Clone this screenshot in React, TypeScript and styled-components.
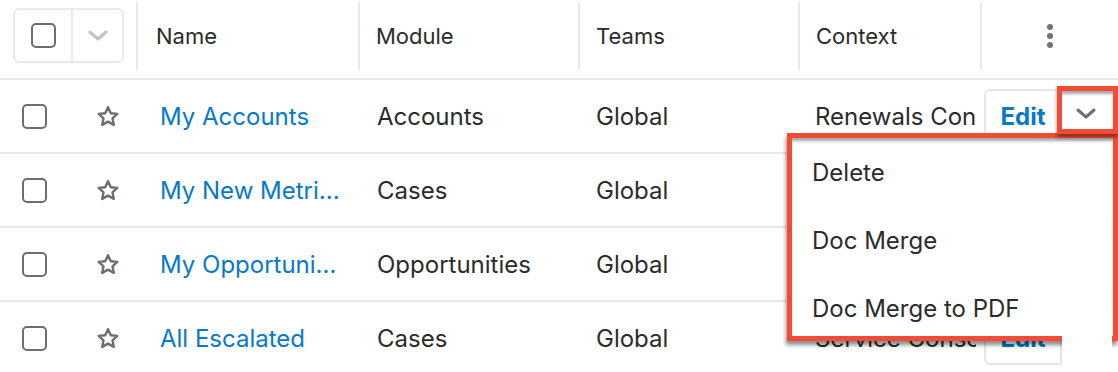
import React from "react";
import styled, { createGlobalStyle } from "styled-components";

const GlobalStyle = createGlobalStyle`
  html, body { margin: 0; padding: 0; background: #ffffff; }
  body {
    font-family: Inter, "Noto Sans", "Liberation Sans", sans-serif;
    color: #2b2b2b;
    -webkit-font-smoothing: antialiased;
  }
`;

const HEAD_COLS = "136px 222px 220px 220px 182px 138px";
const ROW_COLS = "136px 222px 220px 220px 178px 142px";

const Table = styled.div`
  position: relative;
  width: 1118px;
  height: 372px;
  overflow: hidden;
`;

const HeaderRow = styled.div`
  display: grid;
  grid-template-columns: ${HEAD_COLS};
  height: 78px;
  border-bottom: 2px solid #e6e9ed;
`;

const HeadCell = styled.div<{ $divider?: boolean; $pad?: number; $center?: boolean }>`
  margin-top: 2px;
  height: 68px;
  display: flex;
  align-items: center;
  justify-content: ${(p) => (p.$center ? "center" : "flex-start")};
  box-sizing: border-box;
  border-left: ${(p) => (p.$divider ? "2px solid #e6e9ed" : "none")};
  padding-left: ${(p) => p.$pad ?? 0}px;
  font-size: 22px;
  color: #2b2b2b;
`;

const SelectAll = styled.div`
  margin-left: 13px;
  margin-top: 6px;
  align-self: flex-start;
  width: 111px;
  height: 55px;
  box-sizing: border-box;
  border: 2px solid #e8ebee;
  border-radius: 6px;
  display: flex;
`;

const SelectPart = styled.div<{ $divider?: boolean }>`
  flex: ${(p) => (p.$divider ? "1" : "0 0 56px")};
  display: flex;
  align-items: center;
  justify-content: center;
  border-left: ${(p) => (p.$divider ? "2px solid #e8ebee" : "none")};
`;

const Checkbox = styled.span`
  display: inline-block;
  width: 25px;
  height: 25px;
  box-sizing: border-box;
  border: 2px solid #6e6e6e;
  border-radius: 5px;
  background: #fff;
`;

const Kebab = styled.div`
  display: flex;
  flex-direction: column;
  gap: 3px;
  span {
    width: 6px;
    height: 6px;
    border-radius: 50%;
    background: #6f7377;
  }
`;

const Row = styled.div<{ $last?: boolean }>`
  display: grid;
  grid-template-columns: ${ROW_COLS};
  height: 72px;
  border-bottom: ${(p) => (p.$last ? "none" : "2px solid #e6e9ed")};
  align-items: center;
  font-size: 24px;
`;

const SelectCell = styled.div`
  display: flex;
  align-items: center;
  padding-left: 22px;
  gap: 49px;
`;

const Cell = styled.div<{ $pad: number }>`
  padding-left: ${(p) => p.$pad}px;
  white-space: nowrap;
  overflow: hidden;
  min-width: 0;
  color: #2b2b2b;
`;

const NameLink = styled.a`
  color: #0679c8;
  text-decoration: none;
`;

const Actions = styled.div`
  display: flex;
  align-self: stretch;
  align-items: center;
  padding-left: 8px;
`;

const EditButton = styled.div`
  width: 78px;
  height: 54px;
  box-sizing: border-box;
  border: 2px solid #e3e6ea;
  border-radius: 6px 0 0 6px;
  background: #fff;
  display: flex;
  align-items: center;
  justify-content: center;
  color: #0679c8;
  font-weight: 700;
  font-size: 24px;
`;

const CaretButton = styled.div<{ $highlight?: boolean }>`
  position: relative;
  z-index: 3;
  box-sizing: border-box;
  width: ${(p) => (p.$highlight ? "61px" : "50px")};
  height: 48px;
  margin-left: ${(p) => (p.$highlight ? "-5px" : "0")};
  align-self: ${(p) => (p.$highlight ? "flex-start" : "center")};
  margin-top: ${(p) => (p.$highlight ? "6px" : "0")};
  border: ${(p) => (p.$highlight ? "5px solid #f24c37" : "none")};
  background: #fff;
  box-shadow: ${(p) =>
    p.$highlight
      ? "0 3px 4px rgba(0,0,0,0.45), inset 0 4px 3px -1px rgba(0,0,0,0.35)"
      : "none"};
  display: flex;
  align-items: center;
  justify-content: center;
  padding-top: 6px;
  padding-right: 4px;
`;

const Menu = styled.div`
  position: absolute;
  left: 787px;
  top: 133px;
  width: 331px;
  height: 208px;
  box-sizing: border-box;
  border: 5px solid #f24c37;
  background: #fff;
  z-index: 2;
  box-shadow: -1px 4px 4px rgba(0, 0, 0, 0.45), inset 0 4px 3px -1px rgba(0, 0, 0, 0.35);
  overflow: hidden;
`;

const MenuItem = styled.div`
  height: 68px;
  display: flex;
  align-items: center;
  padding-left: 20px;
  font-size: 24px;
  color: #2b2b2b;
`;

const Chevron = ({ color }: { color: string }) => (
  <svg width="20" height="11" viewBox="0 0 20 11" fill="none">
    <path d="M2 2l8 7 8-7" stroke={color} strokeWidth="3" strokeLinecap="round" strokeLinejoin="round" />
  </svg>
);

const Star = () => (
  <svg width="24" height="23" viewBox="0 0 24 23" fill="none">
    <path
      d="M12 2.2l2.8 6 6.5.7-4.8 4.5 1.3 6.5L12 16.6l-5.8 3.3 1.3-6.5-4.8-4.5 6.5-.7z"
      stroke="#6b6f73"
      strokeWidth="2.4"
      strokeLinejoin="round"
    />
  </svg>
);

type Rec = { name: string; module: string; teams: string; context: string };

const rows: Rec[] = [
  { name: "My Accounts", module: "Accounts", teams: "Global", context: "Renewals Console" },
  { name: "My New Metri...", module: "Cases", teams: "Global", context: "Service Console" },
  { name: "My Opportuni...", module: "Opportunities", teams: "Global", context: "Renewals Console" },
  { name: "All Escalated", module: "Cases", teams: "Global", context: "Service Console" },
];

export default function App() {
  return (
    <>
      <GlobalStyle />
      <Table>
        <HeaderRow>
          <HeadCell>
            <SelectAll>
              <SelectPart>
                <Checkbox />
              </SelectPart>
              <SelectPart $divider>
                <Chevron color="#c3c3c3" />
              </SelectPart>
            </SelectAll>
          </HeadCell>
          <HeadCell $divider $pad={18}>Name</HeadCell>
          <HeadCell $divider $pad={16}>Module</HeadCell>
          <HeadCell $divider $pad={16}>Teams</HeadCell>
          <HeadCell $divider $pad={16}>Context</HeadCell>
          <HeadCell $divider $center>
            <Kebab>
              <span />
              <span />
              <span />
            </Kebab>
          </HeadCell>
        </HeaderRow>
        {rows.map((r, i) => (
          <Row key={i} $last={i === rows.length - 1}>
            <SelectCell>
              <Checkbox />
              <Star />
            </SelectCell>
            <Cell $pad={24}>
              <NameLink>{r.name}</NameLink>
            </Cell>
            <Cell $pad={19}>{r.module}</Cell>
            <Cell $pad={18}>{r.teams}</Cell>
            <Cell $pad={17}>{r.context}</Cell>
            <Actions>
              <EditButton>Edit</EditButton>
              <CaretButton $highlight={i === 0}>
                {i === 0 && <Chevron color="#6b6f73" />}
              </CaretButton>
            </Actions>
          </Row>
        ))}
        <Menu>
          <MenuItem>Delete</MenuItem>
          <MenuItem>Doc Merge</MenuItem>
          <MenuItem>Doc Merge to PDF</MenuItem>
        </Menu>
      </Table>
    </>
  );
}
